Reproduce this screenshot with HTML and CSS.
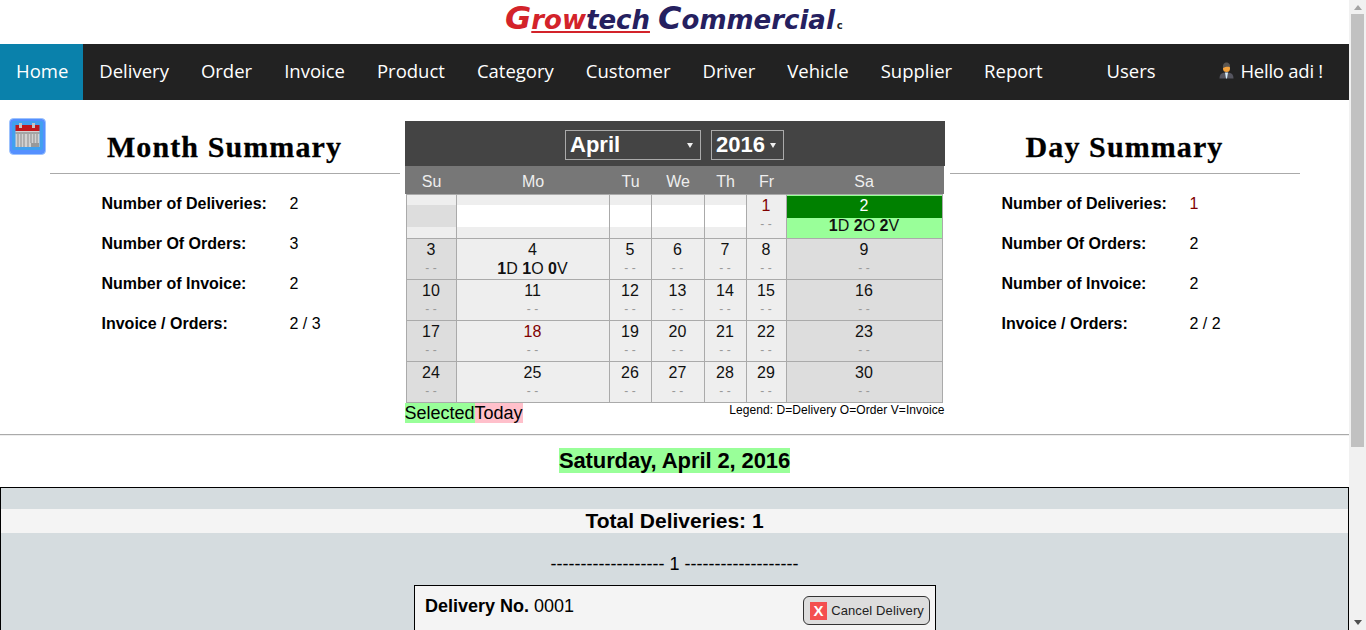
FILE: index.html
```html
<!DOCTYPE html>
<html lang="en">
<head>
    <meta charset="UTF-8">
    <title>Growtech Commercial</title>
    <link rel="stylesheet" href="styles.css">
</head>
<body>
<div class="page">
    <div class="logo">
        <span class="logo-red logo-cap">G</span><span class="logo-line"><span class="logo-red">row</span><span class="logo-navy">tech</span></span>
        <span class="logo-navy logo-cap logo-second">C</span><span class="logo-navy">ommercial</span><span class="logo-c">c</span>
    </div>

    <nav class="menu">
        <a class="active" href="#">Home</a>
        <a href="#">Delivery</a>
        <a href="#">Order</a>
        <a href="#">Invoice</a>
        <a href="#">Product</a>
        <a href="#">Category</a>
        <a href="#">Customer</a>
        <a href="#">Driver</a>
        <a href="#">Vehicle</a>
        <a href="#">Supplier</a>
        <a href="#">Report</a>
        <a class="users" href="#">Users</a>
        <a class="hello" href="#">
            <svg width="15" height="17" viewBox="0 0 15 17">
                <path d="M0.5 16.5 C0.5 12 3 10.5 7.5 10.5 C12 10.5 14.5 12 14.5 16.5 Z" fill="#55555f"/>
                <path d="M6 10.5 L9 10.5 L8 16.5 L7 16.5 Z" fill="#d8ecf8"/>
                <circle cx="7.5" cy="6.5" r="3.5" fill="#f5a33c"/>
                <path d="M4 6 C3.5 2 5.5 0.5 7.5 0.5 C9.5 0.5 11.5 2 11 5 C9 4.5 6.5 4.5 4 6 Z" fill="#5a5652"/>
            </svg>
            Hello adi !
        </a>
    </nav>

    <a class="cal-icon" href="#">
        <svg width="37" height="37" viewBox="0 0 37 37">
            <rect x="0.5" y="0.5" width="36" height="36" rx="4" fill="#5590ff" stroke="#9cc2fd"/>
            <rect x="3" y="3" width="31" height="29" rx="2" fill="#41a0ee"/>
            <rect x="5" y="13" width="24" height="16" transform="translate(1.5 0)" fill="#d2d2d2"/>
            <rect x="6.5" y="7" width="24" height="6" fill="#c0181c"/>
            <rect x="10" y="5" width="3" height="5" fill="#c4c4c4"/>
            <rect x="23" y="5" width="3" height="5" fill="#c4c4c4"/>
            <path d="M9 16V29M12 16V29M15 16V29M19 16V29M22 16V25M25 16V25M28 16V25" stroke="#8b8b8b" stroke-width="1"/>
            <path d="M6.5 15H30.5" stroke="#777" stroke-width="1"/>
            <rect x="22" y="25" width="8" height="4" fill="#999"/>
        </svg>
    </a>

    <section class="top">
        <div class="summary">
            <h2>Month Summary</h2>
            <table class="stats">
                <tr><th>Number of Deliveries:</th><td>2</td></tr>
                <tr><th>Number Of Orders:</th><td>3</td></tr>
                <tr><th>Number of Invoice:</th><td>2</td></tr>
                <tr><th>Invoice / Orders:</th><td>2 / 3</td></tr>
            </table>
        </div>

        <div class="calendar">
            <div class="cal-head">
                <span class="pick pick-month">April<i></i></span>
                <span class="pick pick-year">2016<i></i></span>
            </div>
            <table class="cal-table">
                <colgroup>
                    <col class="c-su"><col class="c-mo"><col class="c-tu"><col class="c-we"><col class="c-th"><col class="c-fr"><col class="c-sa">
                </colgroup>
                <thead>
                    <tr><th>Su</th><th>Mo</th><th>Tu</th><th>We</th><th>Th</th><th>Fr</th><th>Sa</th></tr>
                </thead>
                <tbody>
                    <tr>
                        <td class="empty we"><div></div></td>
                        <td class="empty"><div></div></td>
                        <td class="empty"><div></div></td>
                        <td class="empty"><div></div></td>
                        <td class="empty"><div></div></td>
                        <td><b class="red">1</b><em>- -</em></td>
                        <td class="sel"><b>2</b><span class="has"><u>1</u>D <u>2</u>O <u>2</u>V</span></td>
                    </tr>
                    <tr>
                        <td class="we"><b>3</b><em>- -</em></td>
                        <td><b>4</b><span class="has"><u>1</u>D <u>1</u>O <u>0</u>V</span></td>
                        <td><b>5</b><em>- -</em></td>
                        <td><b>6</b><em>- -</em></td>
                        <td><b>7</b><em>- -</em></td>
                        <td><b>8</b><em>- -</em></td>
                        <td class="we"><b>9</b><em>- -</em></td>
                    </tr>
                    <tr>
                        <td class="we"><b>10</b><em>- -</em></td>
                        <td><b>11</b><em>- -</em></td>
                        <td><b>12</b><em>- -</em></td>
                        <td><b>13</b><em>- -</em></td>
                        <td><b>14</b><em>- -</em></td>
                        <td><b>15</b><em>- -</em></td>
                        <td class="we"><b>16</b><em>- -</em></td>
                    </tr>
                    <tr>
                        <td class="we"><b>17</b><em>- -</em></td>
                        <td><b class="red">18</b><em>- -</em></td>
                        <td><b>19</b><em>- -</em></td>
                        <td><b>20</b><em>- -</em></td>
                        <td><b>21</b><em>- -</em></td>
                        <td><b>22</b><em>- -</em></td>
                        <td class="we"><b>23</b><em>- -</em></td>
                    </tr>
                    <tr>
                        <td class="we"><b>24</b><em>- -</em></td>
                        <td><b>25</b><em>- -</em></td>
                        <td><b>26</b><em>- -</em></td>
                        <td><b>27</b><em>- -</em></td>
                        <td><b>28</b><em>- -</em></td>
                        <td><b>29</b><em>- -</em></td>
                        <td class="we"><b>30</b><em>- -</em></td>
                    </tr>
                </tbody>
            </table>
            <div class="cal-foot">
                <div><span class="key-sel">Selected</span><span class="key-today">Today</span></div>
                <div class="legend">Legend: D=Delivery O=Order V=Invoice</div>
            </div>
        </div>

        <div class="summary">
            <h2>Day Summary</h2>
            <table class="stats">
                <tr><th>Number of Deliveries:</th><td class="red">1</td></tr>
                <tr><th>Number Of Orders:</th><td>2</td></tr>
                <tr><th>Number of Invoice:</th><td>2</td></tr>
                <tr><th>Invoice / Orders:</th><td>2 / 2</td></tr>
            </table>
        </div>
    </section>

    <hr class="rule">

    <div class="day-title"><span>Saturday, April 2, 2016</span></div>

    <section class="deliveries">
        <div class="total">Total Deliveries: 1</div>
        <div class="count">------------------- 1 -------------------</div>
        <div class="card">
            <div class="card-no"><b>Delivery No.</b> 0001</div>
            <button class="cancel" type="button"><span class="x">X</span>Cancel Delivery</button>
        </div>
    </section>
</div>
<div class="scrollbar">
    <div class="arrow arrow-up"></div>
    <div class="thumb"></div>
    <div class="arrow arrow-down"></div>
</div>
</body>
</html>
```

FILE: styles.css
```css
html, body {
    margin: 0;
    height: 630px;
    overflow: hidden;
}
body {
    display: flex;
    font-family: "Liberation Sans", Arial, sans-serif;
    font-size: 16px;
    color: #000;
    background: #fff;
}
.page {
    position: relative;
    width: 1349px;
    height: 630px;
    overflow: hidden;
    flex: none;
}

/* scrollbar */
.scrollbar {
    display: flex;
    flex-direction: column;
    align-items: center;
    width: 17px;
    background: #f1f1f1;
    flex: none;
}
.arrow {
    width: 0;
    height: 0;
    border: 4px solid transparent;
}
.arrow-up {
    margin-top: 5px;
    margin-bottom: 4px;
    border-top: 0;
    border-bottom: 5px solid #a3a3a3;
}
.arrow-down {
    margin-top: auto;
    margin-bottom: 5px;
    border-bottom: 0;
    border-top: 5px solid #505050;
}
.thumb {
    width: 13px;
    height: 433px;
    background: #c1c1c1;
}

/* logo */
.logo {
    height: 44px;
    box-sizing: border-box;
    padding: 0 0 0 505px;
    font-family: "DejaVu Sans", sans-serif;
    font-size: 26px;
    line-height: 37px;
    font-weight: bold;
    font-style: italic;
    white-space: nowrap;
}
.logo-red {
    color: #d3232a;
}
.logo-navy {
    color: #25205f;
}
.logo-cap {
    font-size: 32px;
}
.logo-line {
    text-decoration: underline 2px #d3232a;
    text-underline-offset: 2px;
}
.logo-second {
    margin-left: -1px;
}
.logo-c {
    font-size: 10px;
    font-style: normal;
    color: #222;
    margin-left: 2px;
}

/* menu */
.menu {
    display: flex;
    height: 56px;
    background: #222;
    font-family: "Open Sans", sans-serif;
    font-size: 18.5px;
}
.menu a {
    color: #fff;
    text-decoration: none;
    padding: 0 16px;
    line-height: 54px;
    white-space: nowrap;
}
.menu a.active {
    padding-right: 15px;
    background: #0a81ab;
}
.menu .users {
    margin-left: 32px;
}
.menu .hello {
    margin-left: auto;
    padding-right: 26px;
    letter-spacing: -0.25px;
}
.hello svg {
    vertical-align: -1px;
    margin-right: 2px;
}

.cal-icon {
    position: absolute;
    left: 9px;
    top: 118px;
    line-height: 0;
}

/* top row */
.top {
    display: flex;
    justify-content: center;
    gap: 5px;
    padding-top: 21px;
    height: 334px;
    box-sizing: border-box;
}
.summary {
    width: 350px;
}
.summary h2 {
    margin: 0;
    height: 52px;
    border-bottom: 1px solid #aaa;
    text-align: center;
    font-family: "Liberation Serif", serif;
    font-size: 30px;
    line-height: 52px;
    font-weight: bold;
    letter-spacing: 1.1px;
    -webkit-text-stroke: 0.3px #000;
}
.stats {
    border-collapse: collapse;
    margin: 10px 0 0 52px;
}
.stats th, .stats td {
    height: 40px;
    padding: 0;
    text-align: left;
    font-size: 16px;
}
.stats th {
    width: 188px;
}
.stats td.red {
    color: #800000;
}

/* calendar */
.calendar {
    width: 540px;
}
.cal-head {
    height: 45px;
    box-sizing: border-box;
    padding-top: 2px;
    background: #444;
    display: flex;
    justify-content: center;
    align-items: center;
    gap: 10px;
}
.pick {
    position: relative;
    height: 28px;
    border: 1px solid #aaa;
    color: #fff;
    font-size: 22px;
    font-weight: bold;
    line-height: 28px;
    padding-left: 4px;
}
.pick i {
    position: absolute;
    right: 7px;
    top: 12px;
    border: 3px solid transparent;
    border-top: 5px solid #eee;
    border-bottom: 0;
}
.pick-month {
    width: 130px;
}
.pick-year {
    width: 67px;
}
.cal-table {
    width: 537px;
    margin-left: 1px;
    table-layout: fixed;
    border-collapse: collapse;
    font-size: 16px;
}
.c-su { width: 50px; }
.c-mo { width: 153px; }
.c-tu { width: 42px; }
.c-we { width: 53px; }
.c-th { width: 42px; }
.c-fr { width: 40px; }
.c-sa { width: 156px; }
.cal-table th {
    height: 28px;
    padding: 4px 0 0 1px;
    box-sizing: border-box;
    background: #777;
    color: #eee;
    font-weight: normal;
}
.cal-table th:first-child {
    box-shadow: -1px 0 #777;
}
.cal-table th:last-child {
    padding-left: 0;
    box-shadow: 2px 0 #777;
}
.cal-table td {
    height: 40px;
    padding: 0;
    text-align: center;
    background: #eee;
    border: 1px solid #aaa;
    vertical-align: top;
    color: #111;
}
.cal-table td.we {
    background: #ddd;
}
.cal-table b {
    display: block;
    height: 22px;
    font-weight: normal;
    line-height: 22px;
}
.cal-table b.red {
    color: #800000;
}
.cal-table em {
    display: block;
    font-style: normal;
    font-size: 12px;
    line-height: 14px;
    color: #999;
}
.has {
    display: block;
    line-height: 16px;
    font-size: 16px;
}
.has u {
    font-weight: bold;
    text-decoration: none;
}
.cal-table td.empty {
    padding: 10px 0 11px;
    height: 22px;
    box-sizing: content-box;
}
.cal-table td.empty.we {
    background: #eee;
}
.empty div {
    height: 22px;
    background: #fff;
}
.empty.we div {
    background: #ddd;
}
.cal-table td.sel {
    background: #9f9;
    padding-top: 1px;
}
.cal-table .sel b {
    background: #008000;
    color: #fff;
    line-height: 20px;
}
.cal-foot {
    display: flex;
    justify-content: space-between;
    font-size: 18px;
}
.key-sel {
    background: #9f9;
}
.key-today {
    background: #ffc0cb;
}
.legend {
    font-size: 12px;
    line-height: 14px;
    letter-spacing: 0.08px;
}

.rule {
    margin: 0;
    height: 0;
    border: 0;
    border-top: 1px solid #aaa;
    border-bottom: 1px solid #eee;
}

.day-title {
    height: 51px;
    padding-top: 12px;
    box-sizing: border-box;
    text-align: center;
    font-size: 22px;
    font-weight: bold;
    letter-spacing: -0.1px;
}
.day-title span {
    background: #9f9;
}

/* deliveries */
.deliveries {
    border: 1px solid #000;
    background: #d5dcdf;
    padding-top: 21px;
    height: 300px;
}
.total {
    height: 24px;
    background: #f4f4f4;
    text-align: center;
    font-size: 21px;
    font-weight: bold;
    line-height: 24px;
}
.count {
    margin-top: 22px;
    height: 30px;
    text-align: center;
    font-size: 18px;
    line-height: 18px;
}
.card {
    display: flex;
    justify-content: space-between;
    align-items: flex-start;
    box-sizing: border-box;
    width: 522px;
    height: 120px;
    margin-left: 413px;
    padding: 10px 5px 0 10px;
    border: 1px solid #000;
    background: #f4f4f4;
}
.card-no {
    font-size: 18px;
}
.cancel {
    display: flex;
    align-items: center;
    height: 29px;
    box-sizing: border-box;
    padding: 0 5px 0 6px;
    border: 1px solid #333;
    border-radius: 6px;
    background: #ddd;
    color: #222;
    font-family: "Liberation Sans", sans-serif;
    font-size: 13px;
    letter-spacing: 0.12px;
}
.x {
    width: 17px;
    height: 18px;
    margin-right: 4px;
    background: #f44f4f;
    color: #fff;
    font-size: 15px;
    font-weight: bold;
    line-height: 18px;
}
```
